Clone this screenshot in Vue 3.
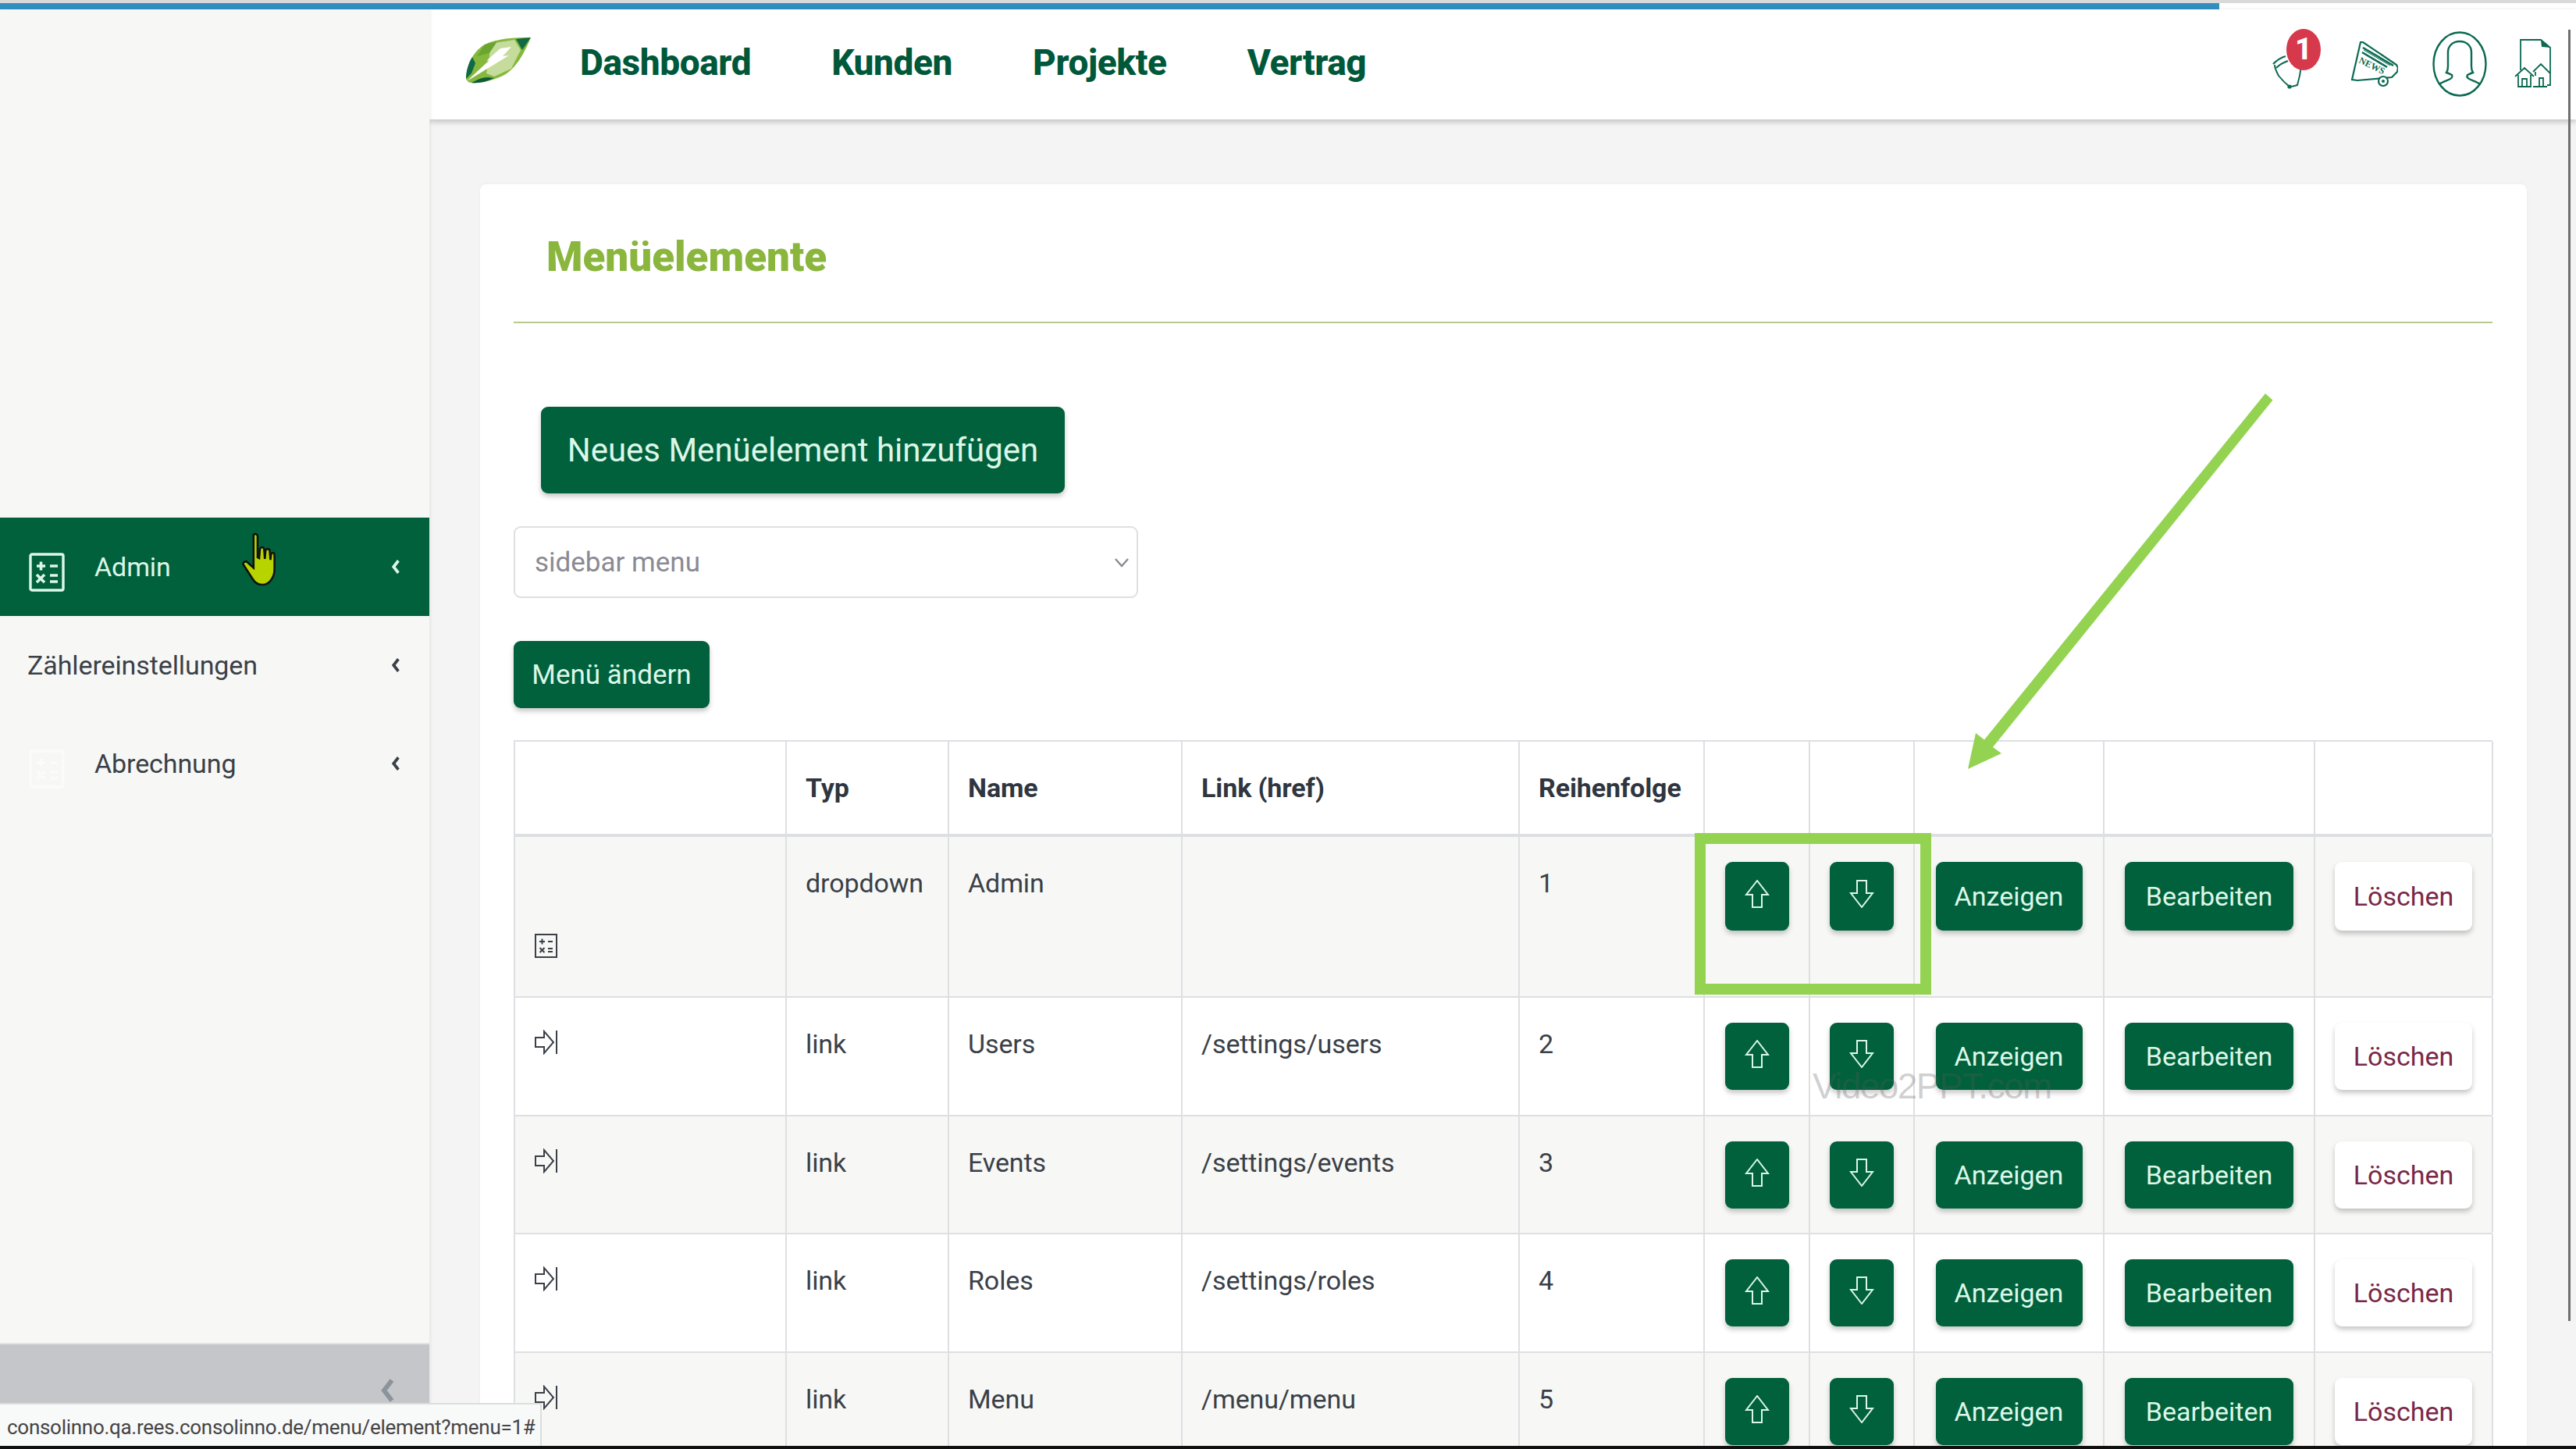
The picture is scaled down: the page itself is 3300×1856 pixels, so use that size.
<template>
	<div class="page">
		<div class="top-strip">
			<div class="progress"></div>
		</div>
		<div class="shell">
			<aside class="sidebar">
				<nav class="side-menu">
					<a
						v-for="item in sideItems"
						:key="item.label"
						class="side-item"
						:class="{ active: item.active, flush: !item.icon }"
					>
						<svg v-if="item.icon" class="side-icon" viewBox="0 0 46 50">
							<rect x="2" y="2" width="42" height="46" rx="2" fill="none" stroke="currentColor" stroke-width="3.4" />
							<path d="M10 17h11M15.500 11.500v11M27 17h10M10 28l10 10M20 28l-10 10M27 29h10M27 37h10" fill="none" stroke="currentColor" stroke-width="3.6" />
						</svg>
						<span class="side-label">{{ item.label }}</span>
						<svg class="side-chevron" viewBox="0 0 10 18">
							<path d="M8 2 2.500 9 8 16" fill="none" stroke="currentColor" stroke-width="3.4" />
						</svg>
					</a>
				</nav>
				<div class="side-footer">
					<svg class="collapse" viewBox="0 0 20 32">
						<path d="M15 3 5 16l10 13" fill="none" stroke="currentColor" stroke-width="6" />
					</svg>
				</div>
			</aside>

			<div class="main">
				<header class="topbar">
					<svg class="logo" viewBox="0 0 84 60">
						<path d="M83 0C62 0 40 1 24 9 10 17 1 34 0 53c1 3 4 5 7 5 7 1 22-1 38-8C62 43 74 22 83 0Z" fill="#86b83c" />
						<path d="M83 0 64 2l8 14Z" fill="#0f6a45" />
						<path d="M30 8 62 3l8 13-12 24-22 10-10-4 4-22Z" fill="#c5dc9c" />
						<path d="M24 9 40 5 30 20 14 24Z" fill="#6aa52f" />
						<path d="M0 53c0-10 3-20 8-28l4 8L7 46Z" fill="#0f6a45" />
						<path d="M7 58c6-3 12-7 21-7l8 1c-10 5-20 7-29 6Z" fill="#0b5b3b" />
						<path d="M44 14 58 12 47 24l8-1L1 56l29-27-4 1Z" fill="#fff" />
					</svg>
					<nav class="top-nav">
						<a v-for="link in navLinks" :key="link" class="nav-link">{{ link }}</a>
					</nav>
					<div class="top-icons">
						<div class="bell-wrap">
							<svg class="bell" viewBox="0 0 38 44">
								<path d="M3 13c0 5 3 10 5 14 4 5 9 10 14 14 4 0 7-1 10-2 2-7 4-16 5-24" fill="none" stroke="#0b6a52" stroke-width="2" />
								<path d="M1 12C5 8 10 4 17 2M5 17c4-4 9-7 15-9" fill="none" stroke="#0b6a52" stroke-width="2.200" />
								<circle cx="22" cy="41" r="2.600" fill="#0b6a52" />
							</svg>
							<span class="badge">1</span>
						</div>
						<svg class="news" viewBox="0 0 60 58">
							<path d="M12 1 1 49l7 1 44-4 7-7 1-5-2-4L15 1Z" fill="none" stroke="#0b6a52" stroke-width="2.200" />
							<path d="M15 8 54 31M14 14l32 19" fill="none" stroke="#0b6a52" stroke-width="2.600" />
							<path d="M16 11 50 31" fill="none" stroke="#0b6a52" stroke-width="1" />
							<text x="9" y="27" class="news-text" transform="rotate(26 9 27)">NEWS</text>
							<circle cx="41" cy="51" r="6" fill="#fff" stroke="#0b6a52" stroke-width="2.200" />
							<circle cx="41" cy="51" r="2" fill="#0b6a52" />
						</svg>
						<svg class="person" viewBox="0 0 70 84">
							<ellipse cx="35" cy="42" rx="33.500" ry="40.500" fill="none" stroke="#0b6a52" stroke-width="2.400" />
							<path d="M8 68c5-3 11-5 15-7 2-1 3-3 2-5-4-2-7-3-7-3 2-3 2-5 2-8V27c0-9 7-14 15-14s15 5 15 14v18c0 3 0 5 2 8 0 0-3 1-7 3-1 2 0 4 2 5 4 2 10 4 15 7" fill="none" stroke="#0b6a52" stroke-width="2.400" />
						</svg>
						<svg class="doc" viewBox="0 0 48 64">
							<path d="M8 40V1h26l12 10v48h-4" fill="none" stroke="#0b6a52" stroke-width="1.800" />
							<path d="M34 1l1 9 11 1Z" fill="#0b6a52" />
							<path d="M1 48 13 37l12 11M5 46v15h16V46M10 61V51h6v10M24 42l10-10 12 12M27 42v5M32 61V50h5v10M24 61h18" fill="none" stroke="#0b6a52" stroke-width="1.800" />
						</svg>
					</div>
				</header>

				<div class="content">
					<section class="card">
						<h1 class="card-title">Menüelemente</h1>
						<div class="add-row">
							<button class="btn btn-add">Neues Menüelement hinzufügen</button>
						</div>
						<div class="select-box">
							<span>sidebar menu</span>
							<svg class="select-arrow" viewBox="0 0 20 14">
								<path d="M2 3l8 9 8-9" fill="none" stroke="currentColor" stroke-width="2.400" />
							</svg>
						</div>
						<button class="btn btn-change">Menü ändern</button>

						<div class="menu-table">
							<div class="tr head">
								<div class="td"></div>
								<div class="td">Typ</div>
								<div class="td">Name</div>
								<div class="td">Link (href)</div>
								<div class="td">Reihenfolge</div>
								<div class="td"></div>
								<div class="td"></div>
								<div class="td"></div>
								<div class="td"></div>
								<div class="td"></div>
							</div>
							<div
								v-for="(row, i) in rows"
								:key="row.name"
								class="tr"
								:class="{ striped: i % 2 === 0, tall: i === 0 }"
							>
								<div class="td icon-cell">
									<svg v-if="i === 0" class="calc-icon" viewBox="0 0 29 31">
										<rect x="1" y="1" width="27" height="29" fill="none" stroke="#3a4048" stroke-width="2" />
										<path d="M6 10h7M9.500 6.500v7M17 10h6M6.500 18l6 6M12.500 18l-6 6M17 19h6M17 23h6" fill="none" stroke="#3a4048" stroke-width="2" />
									</svg>
									<svg v-else class="link-icon" viewBox="0 0 30 32">
										<path d="M1 10h11V2l12 14-12 14v-8H1Z" fill="none" stroke="#3a4048" stroke-width="2" />
										<path d="M28 1v30" fill="none" stroke="#3a4048" stroke-width="2" />
									</svg>
								</div>
								<div class="td">{{ row.type }}</div>
								<div class="td">{{ row.name }}</div>
								<div class="td">{{ row.href }}</div>
								<div class="td">{{ row.order }}</div>
								<div class="td btn-cell">
									<button class="btn btn-square">
										<svg class="move-icon" viewBox="0 0 32 36">
											<path d="M16 1 2 19h8v16h12V19h8Z" fill="none" stroke="currentColor" stroke-width="2" />
										</svg>
									</button>
								</div>
								<div class="td btn-cell">
									<button class="btn btn-square">
										<svg class="move-icon" viewBox="0 0 32 36">
											<path d="M16 35 2 17h8V1h12v16h8Z" fill="none" stroke="currentColor" stroke-width="2" />
										</svg>
									</button>
								</div>
								<div class="td btn-cell"><button class="btn btn-action btn-show">Anzeigen</button></div>
								<div class="td btn-cell"><button class="btn btn-action btn-edit">Bearbeiten</button></div>
								<div class="td btn-cell"><button class="btn btn-action btn-delete">Löschen</button></div>
							</div>
						</div>
					</section>
					<div class="scrollbar"></div>
				</div>
			</div>
		</div>

		<svg class="cursor" viewBox="0 0 42 66">
			<path d="M15 3c2-2 5-1 5 2v26l2 1 1-12c2-2 4-2 5 0l1 13 1-11c2-2 4-2 5 0l1 12 1-8c2-1 4-1 4 2v18c0 9-6 19-15 19-6 0-9-2-12-7L3 41c-2-3 0-5 3-5l9 8Z" fill="#b7d400" stroke="#111" stroke-width="2.500" />
		</svg>
		<svg class="arrow" viewBox="0 0 400 490">
			<polygon points="381,4 390.500,12.500 32,457 43,465 0,485 10,439 21,447.500" fill="#94d351" />
		</svg>
		<div class="highlight"></div>
		<div class="watermark">Video2PPT.com</div>
		<div class="status-bar">consolinno.qa.rees.consolinno.de/menu/element?menu=1#</div>
		<div class="black-line"></div>
	</div>
</template>

<script setup>
const sideItems = [
	{ label: 'Admin', icon: true, active: true },
	{ label: 'Zählereinstellungen', icon: false },
	{ label: 'Abrechnung', icon: true },
]

const navLinks = ['Dashboard', 'Kunden', 'Projekte', 'Vertrag']

const rows = [
	{ type: 'dropdown', name: 'Admin', href: '', order: 1 },
	{ type: 'link', name: 'Users', href: '/settings/users', order: 2 },
	{ type: 'link', name: 'Events', href: '/settings/events', order: 3 },
	{ type: 'link', name: 'Roles', href: '/settings/roles', order: 4 },
	{ type: 'link', name: 'Menu', href: '/menu/menu', order: 5 },
]
</script>

<style>
html,
body {
	margin: 0;
	background: #fff;
}
</style>

<style scoped>
.page {
	position: relative;
	width: 3300px;
	height: 1856px;
	overflow: hidden;
	display: flex;
	flex-direction: column;
	background: #fff;
	font-family: Roboto, 'Liberation Sans', sans-serif;
	color: #3a4048;
}

.top-strip {
	height: 12px;
	flex: none;
	border-top: 4px solid #d9d9d9;
	box-sizing: border-box;
	background: #fff;
}

.progress {
	width: 2843px;
	height: 8px;
	background: #2f8fc0;
}

.shell {
	flex: 1;
	min-height: 0;
	display: flex;
}

.sidebar {
	width: 550px;
	flex: none;
	display: flex;
	flex-direction: column;
	background: #f7f8f5;
	box-shadow: 2px 0 4px rgba(0, 0, 0, 0.06);
	z-index: 1;
}

.side-menu {
	flex: 1;
	padding-top: 651px;
}

.side-item {
	display: flex;
	align-items: center;
	height: 126px;
	padding: 0 37px 0 35px;
	font-size: 34px;
	letter-spacing: -0.1px;
	color: #3a4048;
}

.side-item.active {
	background: #00613c;
	color: #dcf7e8;
}

.side-icon {
	width: 46px;
	height: 50px;
	margin: 14px 38px 0 2px;
	flex: none;
}

.side-item:not(.active) .side-icon {
	color: #fbfcfa;
}

.side-label {
	flex: 1;
}

.side-chevron {
	width: 12px;
	height: 20px;
	flex: none;
}

.side-footer {
	height: 136px;
	flex: none;
	background: #c4c6c9;
	border-top: 2px solid #e2e3e4;
	box-sizing: border-box;
	display: flex;
	justify-content: flex-end;
	padding: 43px 43px 0 0;
}

.collapse {
	width: 20px;
	height: 32px;
	color: #8d939b;
}

.main {
	flex: 1;
	min-width: 0;
	display: flex;
	flex-direction: column;
	background: #f4f4f4;
}

.topbar {
	height: 141px;
	flex: none;
	display: flex;
	align-items: center;
	background: #fff;
	box-shadow: 0 3px 7px rgba(0, 0, 0, 0.22);
	padding-left: 47px;
	position: relative;
}

.logo {
	width: 84px;
	height: 60px;
	flex: none;
	margin-top: -10px;
}

.top-nav {
	display: flex;
	gap: 103px;
	margin-left: 62px;
	margin-top: -6px;
}

.nav-link {
	font-size: 46px;
	font-weight: 800;
	letter-spacing: -0.4px;
	color: #00583a;
}

.top-icons {
	margin-left: auto;
	display: flex;
	align-items: center;
	margin-right: 31px;
	margin-top: -2px;
}

.bell-wrap {
	position: relative;
	width: 38px;
	height: 44px;
	margin-top: 20px;
	margin-right: 63px;
}

.bell {
	width: 38px;
	height: 44px;
	display: block;
}

.badge {
	position: absolute;
	left: 18px;
	top: -33px;
	width: 44px;
	height: 53px;
	border-radius: 50%;
	background: #d5394b;
	color: #fff;
	font-size: 38px;
	font-weight: 800;
	display: flex;
	align-items: center;
	justify-content: center;
}

.news {
	width: 60px;
	height: 58px;
	margin-right: 44px;
}

.news-text {
	font-family: 'Liberation Serif', serif;
	font-size: 12px;
	font-weight: 700;
	fill: #0b6a52;
}

.person {
	width: 70px;
	height: 84px;
	margin-right: 35px;
}

.doc {
	width: 48px;
	height: 64px;
}

.content {
	flex: 1;
	min-height: 0;
	display: flex;
	padding: 83px 0 0 65px;
	overflow: hidden;
}

.card {
	width: 2622px;
	flex: none;
	background: #fff;
	border-radius: 8px 8px 0 0;
	box-sizing: border-box;
	padding: 0 44px 0 43px;
	box-shadow: 0 0 4px rgba(0, 0, 0, 0.04);
}

.card-title {
	margin: 0;
	height: 178px;
	box-sizing: border-box;
	padding: 63px 0 0 42px;
	font-size: 53px;
	line-height: 60px;
	font-weight: 900;
	color: #8ab63e;
	border-bottom: 2px solid #b9ca8f;
}

.btn {
	font-family: inherit;
	border: none;
	padding: 0;
	background: #00613c;
	color: #dcf7e8;
	border-radius: 9px;
	box-shadow: 0 4px 6px rgba(0, 0, 0, 0.22);
	display: inline-flex;
	align-items: center;
	justify-content: center;
}

.add-row {
	padding: 107px 0 0 35px;
}

.btn-add {
	width: 671px;
	height: 111px;
	font-size: 42px;
}

.select-box {
	margin-top: 42px;
	width: 800px;
	height: 92px;
	box-sizing: border-box;
	border: 2px solid #dedfe1;
	border-radius: 9px;
	padding: 0 9px 0 25px;
	display: flex;
	align-items: center;
	justify-content: space-between;
	font-size: 35px;
	color: #8a8a93;
}

.select-arrow {
	width: 20px;
	height: 14px;
}

.btn-change {
	display: flex;
	margin-top: 55px;
	width: 251px;
	height: 86px;
	font-size: 35px;
}

.menu-table {
	margin-top: 41px;
	border-top: 2px solid #dedfe2;
	border-left: 2px solid #dedfe2;
}

.tr {
	display: grid;
	grid-template-columns: 348px 208px 299px 432px 237px 135px 134px 243px 270px 228px;
	height: 151.500px;
	box-sizing: border-box;
	border-bottom: 2px solid #dedfe2;
	font-size: 34px;
	letter-spacing: -0.1px;
}

.tr.head {
	height: 122px;
	border-bottom-width: 4px;
	font-weight: 700;
	color: #2f3640;
	font-size: 34px;
}

.tr.tall {
	height: 206px;
}

.tr.striped {
	background: #f7f8f5;
}

.td {
	border-right: 2px solid #dedfe2;
	box-sizing: border-box;
	padding: 39px 0 0 24px;
	line-height: 40px;
	white-space: nowrap;
}

.head .td {
	padding-top: 39px;
}

.icon-cell {
	padding: 41px 0 0 25px;
}

.tall .icon-cell {
	padding-top: 124px;
}

.calc-icon {
	width: 29px;
	height: 31px;
	display: block;
}

.link-icon {
	width: 30px;
	height: 32px;
	display: block;
}

.btn-cell {
	padding: 32px 0 0;
	display: flex;
	justify-content: center;
	align-items: flex-start;
}

.btn-square {
	width: 82px;
	height: 86px;
}

.tall .btn-square,
.tall .btn-action {
	height: 88px;
}

.move-icon {
	width: 32px;
	height: 36px;
	margin-top: -6px;
}

.btn-action {
	height: 86px;
	font-size: 34px;
}

.btn-show {
	width: 188px;
}

.btn-edit {
	width: 216px;
}

.btn-delete {
	width: 176px;
	background: #fff;
	color: #7a2848;
}

.scrollbar {
	position: absolute;
	left: 3290px;
	top: 38px;
	width: 3px;
	height: 1654px;
	background: #6f6f6f;
}

.cursor {
	position: absolute;
	left: 309px;
	top: 682px;
	width: 44px;
	height: 68px;
	z-index: 3;
}

.arrow {
	position: absolute;
	left: 2521px;
	top: 500px;
	width: 400px;
	height: 490px;
	z-index: 3;
}

.highlight {
	position: absolute;
	left: 2171px;
	top: 1067px;
	width: 303px;
	height: 207px;
	box-sizing: border-box;
	border: 14px solid #94d351;
	z-index: 3;
}

.watermark {
	position: absolute;
	left: 2322px;
	top: 1365px;
	font-family: 'Liberation Sans', sans-serif;
	font-size: 46px;
	letter-spacing: -1.6px;
	line-height: 52px;
	color: rgba(90, 90, 90, 0.28);
	z-index: 3;
}

.status-bar {
	position: absolute;
	left: 0;
	bottom: 4px;
	width: 694px;
	height: 55px;
	box-sizing: border-box;
	padding-left: 9px;
	background: #f8f9f9;
	border-top: 2px solid #dcdddd;
	border-right: 2px solid #dcdddd;
	font-family: Roboto, 'Liberation Sans', sans-serif;
	font-size: 26px;
	letter-spacing: -0.28px;
	line-height: 58px;
	color: #444;
	white-space: nowrap;
	overflow: hidden;
	z-index: 4;
}

.black-line {
	position: absolute;
	left: 0;
	right: 0;
	bottom: 0;
	height: 4px;
	background: #111;
	z-index: 5;
}
</style>
